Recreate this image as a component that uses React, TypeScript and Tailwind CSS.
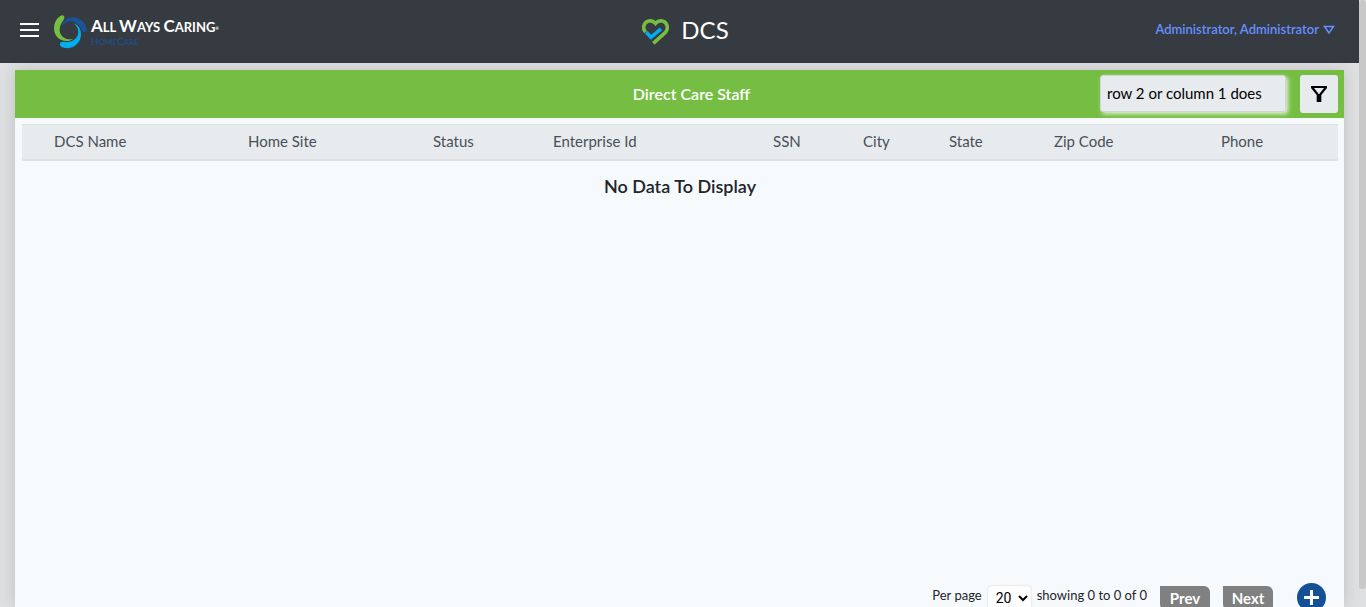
import React from 'react';

const columns = [
  { label: 'DCS Name', width: 'w-[14.74%]' },
  { label: 'Home Site', width: 'w-[14.06%]' },
  { label: 'Status', width: 'w-[9.12%]' },
  { label: 'Enterprise Id', width: 'w-[16.72%]' },
  { label: 'SSN', width: 'w-[6.84%]' },
  { label: 'City', width: 'w-[6.53%]' },
  { label: 'State', width: 'w-[7.98%]' },
  { label: 'Zip Code', width: 'w-[12.69%]' },
  { label: 'Phone', width: 'w-[11.32%]' },
];

function SwirlMark() {
  return (
    <svg viewBox="0 0 33 34" className="h-[34px] w-[33px] shrink-0" aria-hidden="true">
      <path
        d="M7.6 .3C3 2.500 0 7.500 0 13.600c0 7.400 5.800 12.400 12.200 12.400 2.900 0 5.400-.8 7-2.300-2.200.7-4.300.9-6.500.2C8.300 22.500 5.500 19 5.700 14.500c.1-3.700 1.500-6.300 3.600-9.200C11.500 2.300 10-.6 7.600.3Z"
        fill="#76be43"
      />
      <path
        d="M7 12.300C8.600 6.100 13.200 2.200 18.700 2.200c7.500 0 12.500 5.300 14.100 11.600.7 3-2.600 4.400-4.400 2.400C25.500 9.500 21.800 6.200 16.800 6.200c-4.200 0-7.500 2.400-9.800 6.100Z"
        fill="#1b5299"
      />
      <path
        d="M19.600 8.300C24.400 9.800 27 14.200 27 19.300c0 7.600-5.900 13.900-13.600 13.900-2.400 0-5-.5-6.400-1.600-2.200-1.900-1-5 1.800-4.800 6.200.6 10.600-.5 13.300-3.700 3.700-4.400 2.700-10.600-2.500-14.800Z"
        fill="#00aeef"
      />
    </svg>
  );
}

function HeartMark() {
  return (
    <svg viewBox="0 0 27 26" className="mt-1 h-[26px] w-[27px]" fill="none" strokeWidth="3.6" aria-hidden="true">
      <path
        d="M3.600 13.200C1.700 10.900 1.400 9.100 1.800 7.200 3 1.600 9.800.1 13.500 4.400 17.200.1 24 1.600 25.200 7.200c.5 2.600-.4 4.800-2.300 6.700L11.300 24.400"
        stroke="#76be43"
      />
      <path d="M4.300 13.200 9 18.300 19 9.900" stroke="#00aeef" />
    </svg>
  );
}

export default function App() {
  return (
    <div className="flex h-screen overflow-hidden bg-[#dfe0e2] font-[Lato,sans-serif] text-[#212529]">
      <div className="flex min-w-0 flex-1 flex-col">
        <header className="grid h-[63px] shrink-0 grid-cols-[1fr_auto_1fr] items-center bg-[#363a41] pr-6 pb-1 pl-5">
          <div className="flex items-center gap-[15px]">
            <button type="button" aria-label="Open menu" className="flex w-[19px] flex-col gap-1">
              <span className="h-[2px] w-full bg-white" />
              <span className="h-[2px] w-full bg-white" />
              <span className="h-[2px] w-full bg-white" />
            </button>
            <a href="#home" className="flex items-center gap-1 pt-1">
              <SwirlMark />
              <span className="flex flex-col whitespace-nowrap">
                <span className="text-[13px] leading-[18px] font-bold text-white">
                  <span className="text-[17px]">A</span>LL <span className="text-[17px]">W</span>AYS{' '}
                  <span className="text-[17px]">C</span>ARING
                  <sup className="text-[4px]">®</sup>
                </span>
                <span className="text-[8px] leading-[10px] text-[#1b5299]">
                  <span className="text-[10px]">H</span>OME<span className="text-[10px]">C</span>ARE
                </span>
              </span>
            </a>
          </div>
          <div className="flex items-center gap-3 pl-4">
            <HeartMark />
            <h1 className="text-[24px] leading-8 text-white">DCS</h1>
          </div>
          <button type="button" className="flex items-center gap-1 justify-self-end text-[13px] font-semibold text-[#6590ff]">
            Administrator, Administrator
            <svg viewBox="0 0 12 10" className="h-[10px] w-3" fill="none" stroke="currentColor" strokeWidth="1.5" aria-hidden="true">
              <path d="M1.500 1.500h9L6 8Z" />
            </svg>
          </button>
        </header>

        <main className="mx-[15px] mt-[7px] flex min-h-0 flex-1 flex-col bg-[#f6fafd] shadow-[0_0_15px_rgba(0,0,0,0.15)]">
          <div className="grid h-12 shrink-0 grid-cols-[1fr_auto_1fr] items-center bg-[#76be43] pr-[6px]">
            <h2 className="col-start-2 pl-[30px] text-[16px] font-semibold text-white">Direct Care Staff</h2>
            <div className="flex items-start gap-[14px] justify-self-end">
              <input
                type="text"
                aria-label="Search staff"
                defaultValue="row 2 or column 1 does not exist"
                className="h-[37px] w-[186px] rounded-[3px] border border-[#ced4da] bg-[#e8ebee] pr-[22px] pb-[2px] pl-[6px] text-[15px] text-black shadow-[2px_2px_4px_rgba(255,255,255,0.8)] outline-none"
              />
              <button type="button" aria-label="Filter" className="flex h-[38px] w-[38px] items-center justify-center rounded-[3px] bg-[#e8ebee]">
                <svg viewBox="0 0 16 16" className="h-4 w-4" aria-hidden="true">
                  <path d="M0 0h16v2L10.300 9v7H5.700V9L0 2ZM3 2l4.700 6h.6L13 2Z" fill="#000" fillRule="evenodd" />
                </svg>
              </button>
            </div>
          </div>

          <div className="flex-1 pt-[6px] pr-[6px] pl-[7px]">
            <table className="w-full table-fixed border-collapse">
              <thead>
                <tr className="h-[35px] border-t border-b-2 border-[#dee2e6] bg-[#e8ebee]">
                  {columns.map((column) => (
                    <th key={column.label} scope="col" className={`${column.width} pb-[2px] pl-8 text-left text-[15px] font-normal whitespace-nowrap text-[#495057]`}>
                      {column.label}
                    </th>
                  ))}
                </tr>
              </thead>
              <tbody>
                <tr>
                  <td colSpan={9} className="pt-[11px] text-center text-[18px] leading-[28px] font-semibold">
                    No Data To Display
                  </td>
                </tr>
              </tbody>
            </table>
          </div>

          <footer className="flex h-6 shrink-0 items-start justify-end pr-[18px] text-[13px]">
            <label htmlFor="per-page" className="leading-6">Per page</label>
            <select
              id="per-page"
              defaultValue="20"
              className="mt-[3px] mr-[6px] ml-[6px] h-6 w-[43px] rounded-[4px] bg-white pl-1 font-[Roboto,sans-serif] text-[14px] text-black shadow-[0_0_2px_rgba(0,0,0,0.2)]"
            >
              <option>20</option>
              <option>50</option>
              <option>100</option>
            </select>
            <span className="mr-[13px] leading-6">showing 0 to 0 of 0</span>
            <button type="button" className="mt-[3px] mr-[13px] h-6 w-[50px] rounded-tr-[6px] rounded-bl-[6px] bg-[#808080] text-[15px] font-bold text-white">Prev</button>
            <button type="button" className="mt-[3px] mr-6 h-6 w-[50px] rounded-tr-[6px] rounded-bl-[6px] bg-[#808080] text-[15px] font-bold text-white">Next</button>
            <button type="button" aria-label="Add staff" className="flex h-[29px] w-[29px] items-center justify-center rounded-full bg-[#145095]">
              <svg viewBox="0 0 15 15" className="h-[15px] w-[15px]" stroke="#fff" strokeWidth="3" aria-hidden="true">
                <path d="M7.500 0v15M0 7.500h15" />
              </svg>
            </button>
          </footer>
        </main>
      </div>
      <div className="h-full w-[7px] shrink-0 bg-[#dfe0e2]">
        <div className="h-[97%] rounded-[3px] bg-[#c8c8c8]" />
      </div>
    </div>
  );
}
